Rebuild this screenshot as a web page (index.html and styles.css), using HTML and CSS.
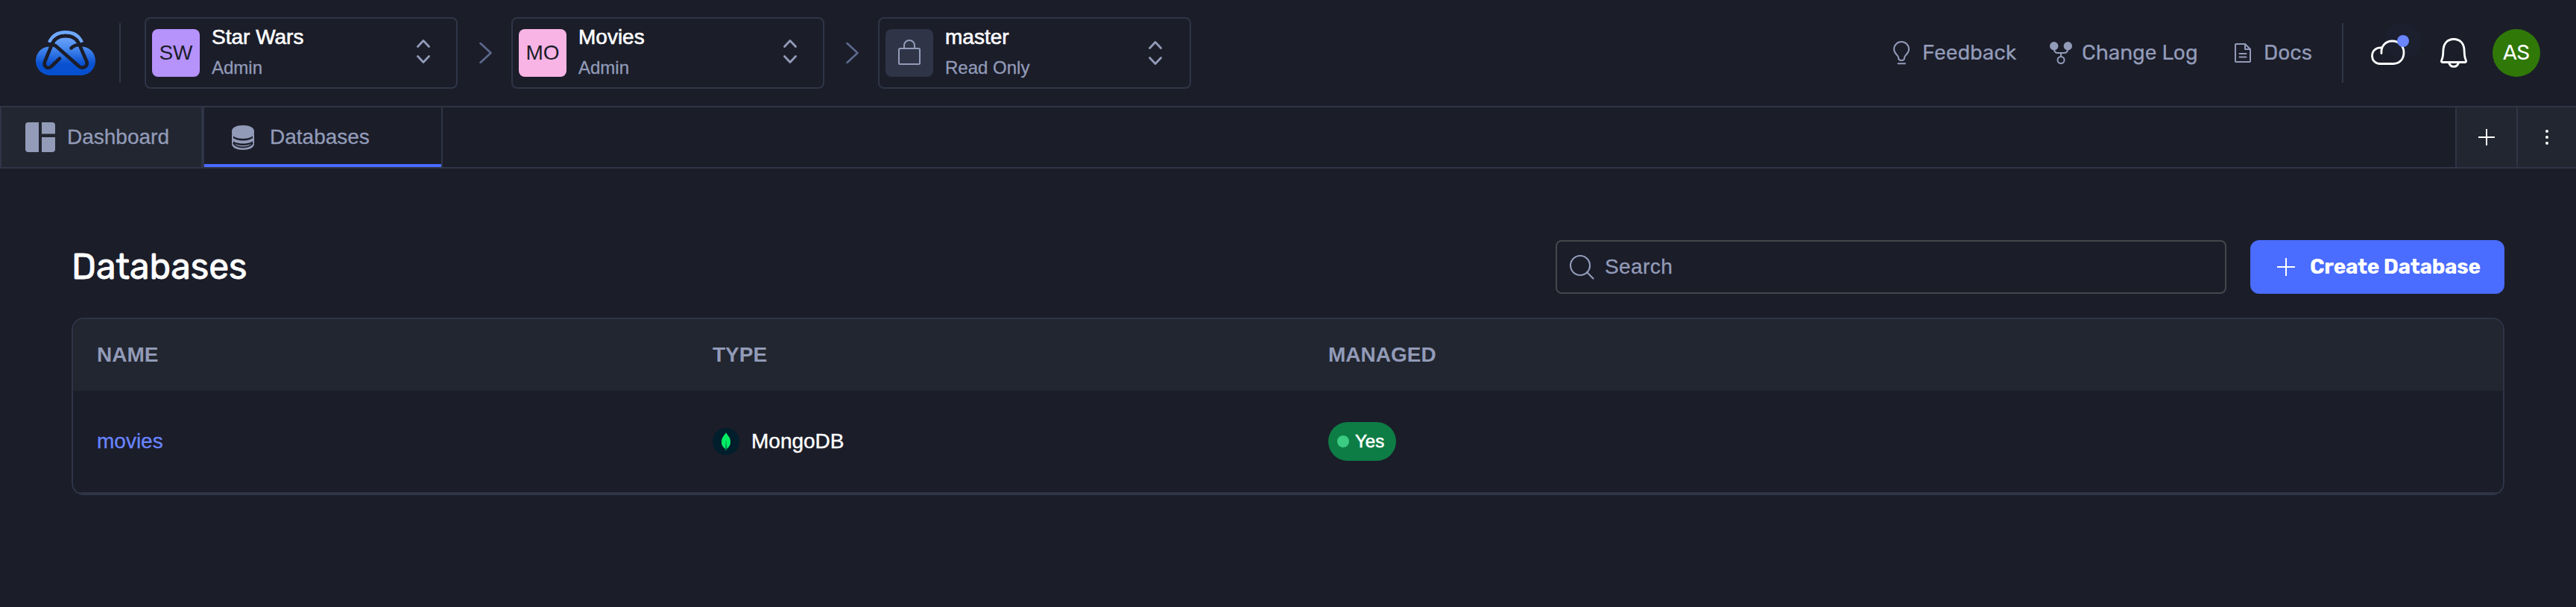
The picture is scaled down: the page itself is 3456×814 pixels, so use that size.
FILE: index.html
```html
<!DOCTYPE html>
<html lang="en">
<head>
<meta charset="utf-8">
<title>Databases</title>
<link rel="stylesheet" href="styles.css">
</head>
<body>
<header class="topbar">
  <svg class="logo" viewBox="0 0 80 60">
    <defs><linearGradient id="lg" x1="0" y1="0" x2="0" y2="60" gradientUnits="userSpaceOnUse"><stop offset="0" stop-color="#7fb2ff"/><stop offset=".35" stop-color="#4f8ff2"/><stop offset=".75" stop-color="#0850d0"/><stop offset="1" stop-color="#0550d0"/></linearGradient></defs>
    <path d="M20 60C8 60 0 51 0 40.500C0 30 8 21.500 18.500 21.500L25 17C28 12 33 9.500 40 9.500S52 12 55 17L61.500 21.500C72 21.500 80 30 80 40.500C80 51 72 60 60 60Z" fill="url(#lg)"/>
    <path d="M18.300 16C22 7 30 2.400 40 2.400S58 7 61.700 16" fill="none" stroke="#6fa8ff" stroke-width="4.800" stroke-linecap="butt"/>
    <path d="M32 37.500L20.500 48.500C16 52 10 48 12 42L22.500 16.500C26 9.500 32 7 40 7S54 9.500 57.500 16.500L68.500 42C70 48 63 52 58 48L29 22.500C26 19.500 23 18 17 18.800M63 18.800C56 18.500 51 20 47.500 23.500" fill="none" stroke="#1b1d29" stroke-width="4.600"/>
  </svg>
  <span class="divider"></span>
  <div class="picker first">
    <span class="badge purple">SW</span>
    <div class="labels"><span class="title">Star Wars</span><span class="role">Admin</span></div>
    <svg class="updown" viewBox="0 0 18 32"><path d="M1.500 9.500L9 1.500L16.500 9.500M1.500 22.500L9 30.500L16.500 22.500"/></svg>
  </div>
  <svg class="crumb" viewBox="0 0 18 28"><path d="M1.500 1L15.500 14L1.500 27"/></svg>
  <div class="picker">
    <span class="badge pink">MO</span>
    <div class="labels"><span class="title">Movies</span><span class="role">Admin</span></div>
    <svg class="updown" viewBox="0 0 18 32"><path d="M1.500 9.500L9 1.500L16.500 9.500M1.500 22.500L9 30.500L16.500 22.500"/></svg>
  </div>
  <svg class="crumb" viewBox="0 0 18 28"><path d="M1.500 1L15.500 14L1.500 27"/></svg>
  <div class="picker">
    <span class="badge slate"><svg class="lock" viewBox="0 0 30 34"><rect x="1" y="12" width="28" height="21" rx="1.500"/><path d="M8 12V8a7 7 0 0 1 14 0v4"/></svg></span>
    <div class="labels"><span class="title">master</span><span class="role">Read Only</span></div>
    <svg class="updown low" viewBox="0 0 18 32"><path d="M1.500 9.500L9 1.500L16.500 9.500M1.500 22.500L9 30.500L16.500 22.500"/></svg>
  </div>
  <nav class="links">
    <a class="link"><svg class="bulb" viewBox="0 0 22 32"><path d="M7 22.500C7 18.500 1 17.500 1 11a10 10 0 0 1 20 0C21 17.500 15 18.500 15 22.500C15 25 14 26 11 26S7 25 7 22.500ZM6.500 30.300H16"/></svg><span class="t-feedback">Feedback</span></a>
    <a class="link"><svg class="fork" viewBox="0 0 30 30"><circle class="solid" cx="5.700" cy="5.700" r="5.700"/><circle class="solid" cx="24.300" cy="5.700" r="5.700"/><circle cx="15" cy="24.500" r="4.500"/><path d="M6 10C6 14 8 15 11 15H19C22 15 24 14 24 10M15 15V20"/></svg><span class="t-change">Change Log</span></a>
    <a class="link"><svg class="doc" viewBox="0 0 22 26"><path d="M1 2Q1 1 2 1H14L21 8V24Q21 25 20 25H2Q1 25 1 24ZM14 1V8H21M6.500 14H15.500M6.500 18.500H15.500"/></svg><span class="t-docs">Docs</span></a>
  </nav>
  <span class="divider"></span>
  <span class="cloudbox">
    <svg class="cloud" viewBox="0 0 46 36"><path d="M14 18.500C13 8.500 20 2 28.500 2C37.500 2 44 9 44 17.500C44 27 37.500 32.500 30 32.500H12C6 32.500 1.500 28 1.500 22C1.500 15 6.500 10.500 14.500 11"/></svg>
    <i class="dot"></i>
  </span>
  <svg class="bell" viewBox="0 0 36 40"><path d="M18 1.500C9 1.500 4.500 8 4 15C3.500 22 4 25 1.800 29.500C1 31.500 1.500 32.500 3 32.500H33C34.500 32.500 35 31.500 34.200 29.500C32 25 32.500 22 32 15C31.500 8 27 1.500 18 1.500ZM11.500 33C12.500 36.500 15 38.300 18 38.300S23.500 36.500 24.500 33"/></svg>
  <span class="avatar">AS</span>
</header>

<div class="tabs">
  <div class="tab dash">
    <svg class="grid" viewBox="0 0 40 40"><path d="M4 0H18V40H4Q0 40 0 36V4Q0 0 4 0ZM22 0H36Q40 0 40 4V15.500H22ZM22 20H40V36Q40 40 36 40H22Z"/></svg>
    <span>Dashboard</span>
  </div>
  <div class="tab active">
    <svg class="db" viewBox="0 0 30 33"><path d="M0 8C0 3 6 0 15 0S30 3 30 8V10.500C30 15 23.500 18 15 18S0 15 0 10.500ZM0 15.500C3.500 19 8.500 20.500 15 20.500S26.500 19 30 15.500V17.500C30 22 23.500 24.500 15 24.500S0 22 0 17.500ZM0 22C3.500 25.500 8.500 27 15 27S26.500 25.500 30 22V25C30 30 23.500 33 15 33S0 30 0 25Z"/><path class="rim" d="M1 13V25M29 13V25"/><path class="cut" d="M2.300 24.500C5 28 9 29.500 15 29.500S25 28 27.700 24.500"/></svg>
    <span>Databases</span>
  </div>
  <div class="tool plus-tool"><svg class="plus" viewBox="0 0 22 22"><path d="M11 0V22M0 11H22"/></svg></div>
  <div class="tool"><svg class="dots" viewBox="0 0 4 20"><circle cx="2" cy="2" r="2"/><circle cx="2" cy="10" r="2"/><circle cx="2" cy="18" r="2"/></svg></div>
</div>

<main class="page">
  <div class="heading">
    <h1>Databases</h1>
    <div class="search"><svg class="glass" viewBox="0 0 33 33"><circle cx="14" cy="14" r="13"/><path d="M23 23L31.500 31.500"/></svg><span>Search</span></div>
    <button class="create"><svg class="plus" viewBox="0 0 24 24"><path d="M12 0V24M0 12H24"/></svg><span>Create Database</span></button>
  </div>
  <section class="table">
    <div class="row head"><span>NAME</span><span>TYPE</span><span>MANAGED</span></div>
    <div class="row body">
      <a class="name">movies</a>
      <span class="type"><svg class="mongo" viewBox="0 0 36 36"><circle cx="18" cy="18" r="18" fill="#001e2b"/><path d="M18 6C16 10 12 12 12 19C12 24 15 26 17.400 28.500L18 31L18.600 28.500C21 26 24 24 24 19C24 12 20 10 18 6Z" fill="#00ed64"/><path d="M18 15L17.300 28.300L17.500 30.500H18.500L19 28Z" fill="#00684a"/></svg>MongoDB</span>
      <span><span class="pill"><i></i>Yes</span></span>
    </div>
  </section>
</main>
</body>
</html>
```
FILE: styles.css
```css
* { box-sizing: border-box; }
body {
  margin: 0;
  height: 814px;
  background: #1b1d29;
  color: #fff;
  font: 28px/32px "Liberation Sans", Arial, sans-serif;
  overflow: hidden;
}
svg { display: block; flex: none; fill: none; stroke-linecap: round; stroke-linejoin: round; }

.topbar {
  display: flex;
  align-items: center;
  height: 144px;
  padding: 0 48px;
  border-bottom: 2px solid #2f3547;
}
.logo { width: 80px; height: 60px; margin-right: 32px; }
.divider { width: 2px; height: 80px; background: #2f3547; flex: none; }
.picker {
  display: flex;
  align-items: center;
  flex: none;
  width: 420px;
  height: 96px;
  border: 2px solid #2f3547;
  border-radius: 8px;
  padding: 0 35px 0 8px;
}
.picker.first { margin-left: 32px; }
.badge {
  display: flex;
  align-items: center;
  justify-content: center;
  width: 64px;
  height: 64px;
  border-radius: 8px;
  color: #1b1d29;
}
.purple { background: #b692fb; }
.pink { background: #f7b4e5; }
.slate { background: #2f3547; }
.lock { width: 30px; height: 34px; stroke: #929bb8; stroke-width: 2; margin-top: -3px; }
.labels { display: flex; flex-direction: column; flex: 1; margin: -2px 0 0 16px; gap: 8px; }
.title { line-height: 34px; -webkit-text-stroke: .6px #fff; }
.role { font-size: 24px; line-height: 32px; color: #929bb8; -webkit-text-stroke: .3px #929bb8; }
.updown { width: 18px; height: 32px; stroke: #929bb8; stroke-width: 2.8; margin-top: -4px; }
.updown.low { margin: 0 2px 0 -2px; }
.crumb { width: 18px; height: 28px; margin: 0 25px 0 29px; stroke: #5c698c; stroke-width: 2.6; }

.links { display: flex; margin-left: auto; margin-right: 41px; font-family: "Rubik", Roboto, sans-serif; color: #929bb8; }
.link { display: flex; align-items: center; -webkit-text-stroke: .2px #929bb8; }
.link svg { stroke: #929bb8; stroke-width: 2; }
.bulb { width: 22px; height: 32px; margin-right: 17px; }
.fork { width: 30px; height: 30px; margin: 0 13px 0 45px; }
.fork .solid { fill: #929bb8; stroke: none; }
.doc { width: 22px; height: 26px; margin: 0 17px 0 50px; }
.t-feedback { width: 126px; }
.t-change { width: 155px; white-space: nowrap; }
.t-docs { width: 64px; }
.cloudbox { position: relative; margin-left: 37px; }
.cloud { width: 46px; height: 36px; stroke: #fff; stroke-width: 2.8; }
.dot {
  position: absolute;
  left: 35px;
  top: -6px;
  width: 16px;
  height: 16px;
  border-radius: 50%;
  background: #6985ff;
  box-shadow: 0 0 0 16px rgba(105, 133, 255, .025);
}
.bell { width: 36px; height: 40px; margin: 0 34px 0 47px; stroke: #fff; stroke-width: 2.8; }
.avatar {
  display: flex;
  align-items: center;
  justify-content: center;
  width: 64px;
  height: 64px;
  border-radius: 50%;
  background: #307808;
  font-family: "Rubik", Roboto, sans-serif;
}

.tabs { display: flex; height: 82px; border-bottom: 2px solid #2f3547; color: #929bb8; -webkit-text-stroke: .3px #929bb8; }
.tab { display: flex; align-items: center; border-right: 2px solid #2f3547; }
.dash { width: 272px; padding-left: 32px; border-left: 2px solid #2f3547; background: #222630; }
.grid { width: 40px; height: 40px; margin-right: 16px; fill: #929bb8; }
.active { width: 322px; padding-left: 37px; border-left: 2px solid #2f3547; box-shadow: inset 0 -4px #4a6cff; }
.db { width: 30px; height: 33px; margin-right: 21px; fill: #929bb8; }
.db .rim { stroke: #929bb8; stroke-width: 2; }
.db .cut { fill: none; stroke: #1b1d29; stroke-width: 2; }
.tool { display: flex; align-items: center; justify-content: center; width: 80px; border-left: 2px solid #2f3547; background: #222630; }
.plus-tool { width: 82px; margin-left: auto; }
.plus { width: 22px; height: 22px; stroke: #fff; stroke-width: 2; }
.dots { width: 4px; height: 20px; fill: #fff; }

.page { padding: 96px 96px 0; }
.heading { display: flex; height: 72px; }
h1 { margin: 0 auto 0 0; font: 400 48px/72px "Rubik", Roboto, sans-serif; -webkit-text-stroke: .8px #fff; }
.search {
  display: flex;
  align-items: center;
  width: 900px;
  margin-right: 32px;
  padding-left: 17px;
  border: 2px solid #46474c;
  border-radius: 8px;
  color: #929bb8;
}
.search span { letter-spacing: .4px; -webkit-text-stroke: .3px #929bb8; }
.glass { width: 33px; height: 33px; margin-right: 14px; stroke: #929bb8; stroke-width: 2.2; }
.create {
  display: flex;
  align-items: center;
  width: 341px;
  border: 0;
  border-radius: 12px;
  padding: 0 0 0 36px;
  background: #4a6cff;
  color: #fff;
  font: 700 28px/32px "Rubik", Roboto, sans-serif;
  letter-spacing: -.3px;
  white-space: nowrap;
}
.create .plus { width: 24px; height: 24px; margin-right: 20px; }
.table {
  height: 238px;
  margin-top: 32px;
  border: 2px solid #2f3547;
  border-radius: 16px;
  overflow: hidden;
}
.row { display: grid; grid-template-columns: 826px 826px 1fr; align-items: center; padding-left: 32px; }
.head { height: 96px; background: #222630; color: #929bb8; font-weight: 700; }
.body { height: 138px; border-bottom: 2px solid #2f3547; }
.name { color: #6985ff; -webkit-text-stroke: .3px #6985ff; }
.type { display: flex; align-items: center; -webkit-text-stroke: .4px #fff; }
.mongo { width: 36px; height: 36px; margin-right: 16px; }
.pill {
  display: inline-flex;
  align-items: center;
  vertical-align: middle;
  width: 91px;
  height: 52px;
  padding-left: 12px;
  border-radius: 26px;
  background: #0d7d45;
  font-size: 24px;
  -webkit-text-stroke: .6px #fff;
}
.pill i { width: 16px; height: 16px; margin-right: 8px; border-radius: 50%; background: #3bcb83; }
```
